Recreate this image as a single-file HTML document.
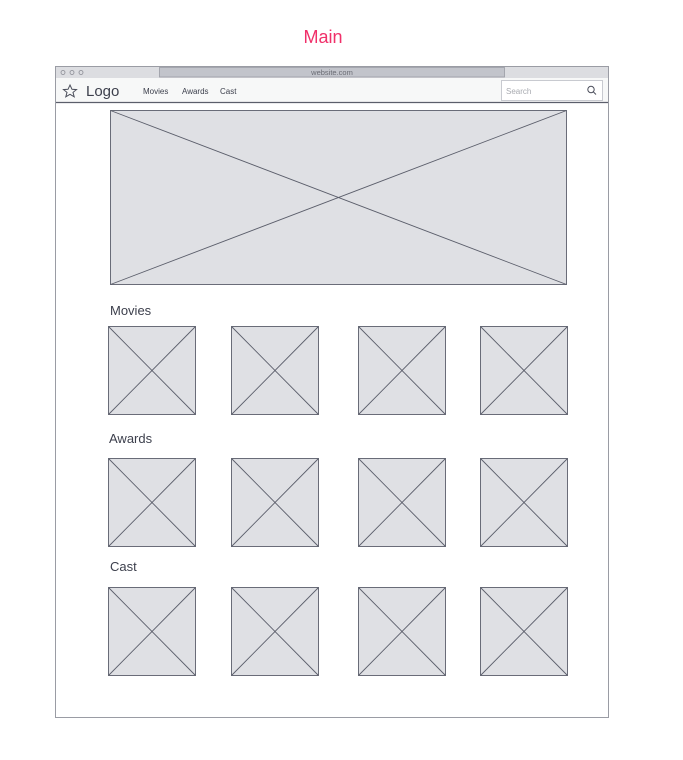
<!DOCTYPE html>
<html><head><meta charset="utf-8"><style>
body{margin:0;background:#fff;width:683px;height:755px;overflow:hidden;font-family:"Liberation Sans",sans-serif}
</style></head><body>
<svg width="683" height="755" xmlns="http://www.w3.org/2000/svg" font-family="Liberation Sans, sans-serif">
<text x="323" y="43" text-anchor="middle" font-size="18" fill="#f0306a">Main</text>
<rect x="55.5" y="66.5" width="553" height="651" fill="#fff" stroke="#9a9ca4"/>
<rect x="56" y="67" width="552" height="11" fill="#dcdde1"/>
<circle cx="63" cy="72.5" r="2" fill="none" stroke="#8a8c94" stroke-width="0.8"/>
<circle cx="72" cy="72.5" r="2" fill="none" stroke="#8a8c94" stroke-width="0.8"/>
<circle cx="81" cy="72.5" r="2" fill="none" stroke="#8a8c94" stroke-width="0.8"/>
<rect x="159.5" y="67.5" width="345" height="9.5" fill="#c2c4cb" stroke="#9a9ca4" stroke-width="0.8"/>
<text x="332" y="75" text-anchor="middle" font-size="7.5" fill="#6a6c74">website.com</text>
<rect x="56" y="78" width="552" height="24" fill="#f7f8f8"/>
<line x1="56" y1="102.5" x2="608" y2="102.5" stroke="#5b5e6b" stroke-width="1.2"/>
<path d="M70 85 L72 89.3 L76.5 89.6 L73 92.4 L74.2 96.8 L70 94.3 L65.8 96.8 L67 92.4 L63.5 89.6 L68 89.3 Z" fill="none" stroke="#4a4d5a" stroke-width="1"/>
<text x="86" y="96" font-size="15" fill="#3c3f4c">Logo</text>
<text x="143" y="94" font-size="8" fill="#3c3f4c">Movies</text>
<text x="182" y="94" font-size="8" fill="#3c3f4c">Awards</text>
<text x="220" y="94" font-size="8" fill="#3c3f4c">Cast</text>
<rect x="501.5" y="80.5" width="101" height="20" fill="#fff" stroke="#c8cad0"/>
<text x="506" y="94" font-size="8" fill="#a8aab0">Search</text>
<circle cx="591" cy="89.5" r="3.2" fill="none" stroke="#4a4d5a" stroke-width="1"/>
<line x1="593.3" y1="91.8" x2="596" y2="94.5" stroke="#4a4d5a" stroke-width="1"/>
<g fill="#dfe0e4" stroke="#5b5e6b" stroke-width="0.9">
<rect x="110.5" y="110.5" width="456" height="174"/>
<line x1="110.5" y1="110.5" x2="566.5" y2="284.5"/><line x1="566.5" y1="110.5" x2="110.5" y2="284.5"/>
</g>
<g font-size="13" fill="#3c3f4c">
<text x="110" y="315">Movies</text><text x="109" y="443">Awards</text><text x="110" y="571">Cast</text>
</g>
<defs><g id="t"><rect x="0.5" y="0.5" width="87" height="88" fill="#dfe0e4" stroke="#5b5e6b" stroke-width="0.9"/><line x1="0.5" y1="0.5" x2="87.5" y2="88.5" stroke="#5b5e6b" stroke-width="0.9"/><line x1="87.5" y1="0.5" x2="0.5" y2="88.5" stroke="#5b5e6b" stroke-width="0.9"/></g></defs>
<use href="#t" x="108" y="326"/><use href="#t" x="231" y="326"/><use href="#t" x="358" y="326"/><use href="#t" x="480" y="326"/>
<use href="#t" x="108" y="458"/><use href="#t" x="231" y="458"/><use href="#t" x="358" y="458"/><use href="#t" x="480" y="458"/>
<use href="#t" x="108" y="587"/><use href="#t" x="231" y="587"/><use href="#t" x="358" y="587"/><use href="#t" x="480" y="587"/>
</svg>
</body></html>
